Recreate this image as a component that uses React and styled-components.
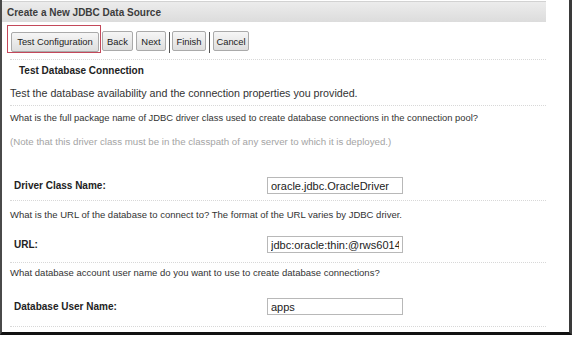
import styled, { createGlobalStyle } from 'styled-components';

const GlobalStyle = createGlobalStyle`
  body {
    margin: 0;
    background: #fff;
    font-family: "Liberation Sans", Arial, sans-serif;
  }
`;

const buttons = [
  { label: 'Back', width: 31, gap: 1 },
  { label: 'Next', width: 30, gap: 3, divider: true },
  { label: 'Finish', width: 34, gap: 1, divider: true },
  { label: 'Cancel', width: 36, gap: 2 },
];

const fields = [
  {
    question: 'What is the URL of the database to connect to? The format of the URL varies by JDBC driver.',
    label: 'URL:',
    value: 'jdbc:oracle:thin:@rws6014',
    qTop: 7,
    fTop: 14,
    rTop: 9,
  },
  {
    question: 'What database account user name do you want to use to create database connections?',
    label: 'Database User Name:',
    value: 'apps',
    qTop: 3,
    fTop: 18,
    rTop: 11,
  },
];

export default function App() {
  return (
    <>
      <GlobalStyle />
      <Frame>
        <Header>Create a New JDBC Data Source</Header>
        <Toolbar>
          <Focus>
            <Button $w={88}>Test Configuration</Button>
          </Focus>
          {buttons.map((b) => (
            <Group key={b.label} $gap={b.gap}>
              <Button $w={b.width}>{b.label}</Button>
              {b.divider && <Divider />}
            </Group>
          ))}
        </Toolbar>
        <Rule $top={6} />
        <Heading>Test Database Connection</Heading>
        <Text $top={8} $size={10.7}>
          Test the database availability and the connection properties you provided.
        </Text>
        <Rule $top={5} />
        <Text $top={5} $size={9.4}>
          What is the full package name of JDBC driver class used to create database connections in the connection pool?
        </Text>
        <Text $top={10} $size={9.7} $muted>
          (Note that this driver class must be in the classpath of any server to which it is deployed.)
        </Text>
        <Field $top={28}>
          <Label>Driver Class Name:</Label>
          <Input defaultValue="oracle.jdbc.OracleDriver" />
        </Field>
        <Rule $top={6} />
        {fields.map((f) => (
          <div key={f.label}>
            <Text $top={f.qTop}>{f.question}</Text>
            <Field $top={f.fTop}>
              <Label>{f.label}</Label>
              <Input defaultValue={f.value} />
            </Field>
            <Rule $top={f.rTop} />
          </div>
        ))}
      </Frame>
    </>
  );
}

const Frame = styled.div`
  box-sizing: border-box;
  width: 572px;
  height: 335px;
  border-left: 2px solid #4a4a4a;
  border-right: 3px solid #3a3a3a;
  border-bottom: 3px solid #111;
  overflow: hidden;
  color: #333;
`;

const Header = styled.div`
  width: 544px;
  height: 21px;
  margin-top: 1px;
  border-top: 1px solid #d2d2d2;
  background: linear-gradient(#ececec, #dcdcdc);
  padding-left: 5px;
  box-sizing: border-box;
  line-height: 21px;
  font-size: 10px;
  font-weight: 700;
  color: #3c3c3c;
`;

const Toolbar = styled.div`
  display: flex;
  align-items: flex-start;
  padding: 3px 0 0 5px;
  height: 31px;
  box-sizing: border-box;
`;

const Focus = styled.div`
  border: 1px solid #c4485a;
  padding: 5px 1px 2px 3px;
  height: 28px;
  box-sizing: border-box;
`;

const Group = styled.div`
  display: flex;
  align-items: flex-start;
  padding-top: 6px;
  margin-left: ${(p) => p.$gap}px;
`;

const Button = styled.button`
  box-sizing: border-box;
  width: ${(p) => p.$w}px;
  height: 20px;
  padding: 0;
  border: 1px solid #aaa;
  border-radius: 2px;
  background: linear-gradient(#f6f6f6, #dedede);
  font-family: "Liberation Sans", Arial, sans-serif;
  font-size: 9.4px;
  color: #222;
`;

const Divider = styled.span`
  width: 1px;
  height: 21px;
  margin: 1px 1px 0 3px;
  background: #555;
`;

const Rule = styled.div`
  width: 536px;
  margin: ${(p) => p.$top}px 0 0 8px;
  border-top: 1px dotted #d8d8d8;
`;

const Heading = styled.div`
  margin: 4px 0 0 17px;
  line-height: 14px;
  font-size: 10px;
  font-weight: 700;
  color: #222;
`;

const Text = styled.div`
  margin: ${(p) => p.$top}px 0 0 8px;
  line-height: 14px;
  font-size: ${(p) => p.$size || 9.5}px;
  white-space: nowrap;
  color: ${(p) => (p.$muted ? '#a4a4a4' : '#333')};
`;

const Field = styled.div`
  display: grid;
  grid-template-columns: 253px 136px;
  align-items: center;
  margin: ${(p) => p.$top}px 0 0 12px;
  height: 17px;
`;

const Label = styled.span`
  font-size: 10px;
  font-weight: 700;
  color: #222;
`;

const Input = styled.input`
  box-sizing: border-box;
  width: 136px;
  height: 17px;
  border: 1px solid #b8b8b8;
  padding: 0 3px;
  font-family: "Liberation Sans", Arial, sans-serif;
  font-size: 11px;
  color: #222;
  outline: none;
`;
